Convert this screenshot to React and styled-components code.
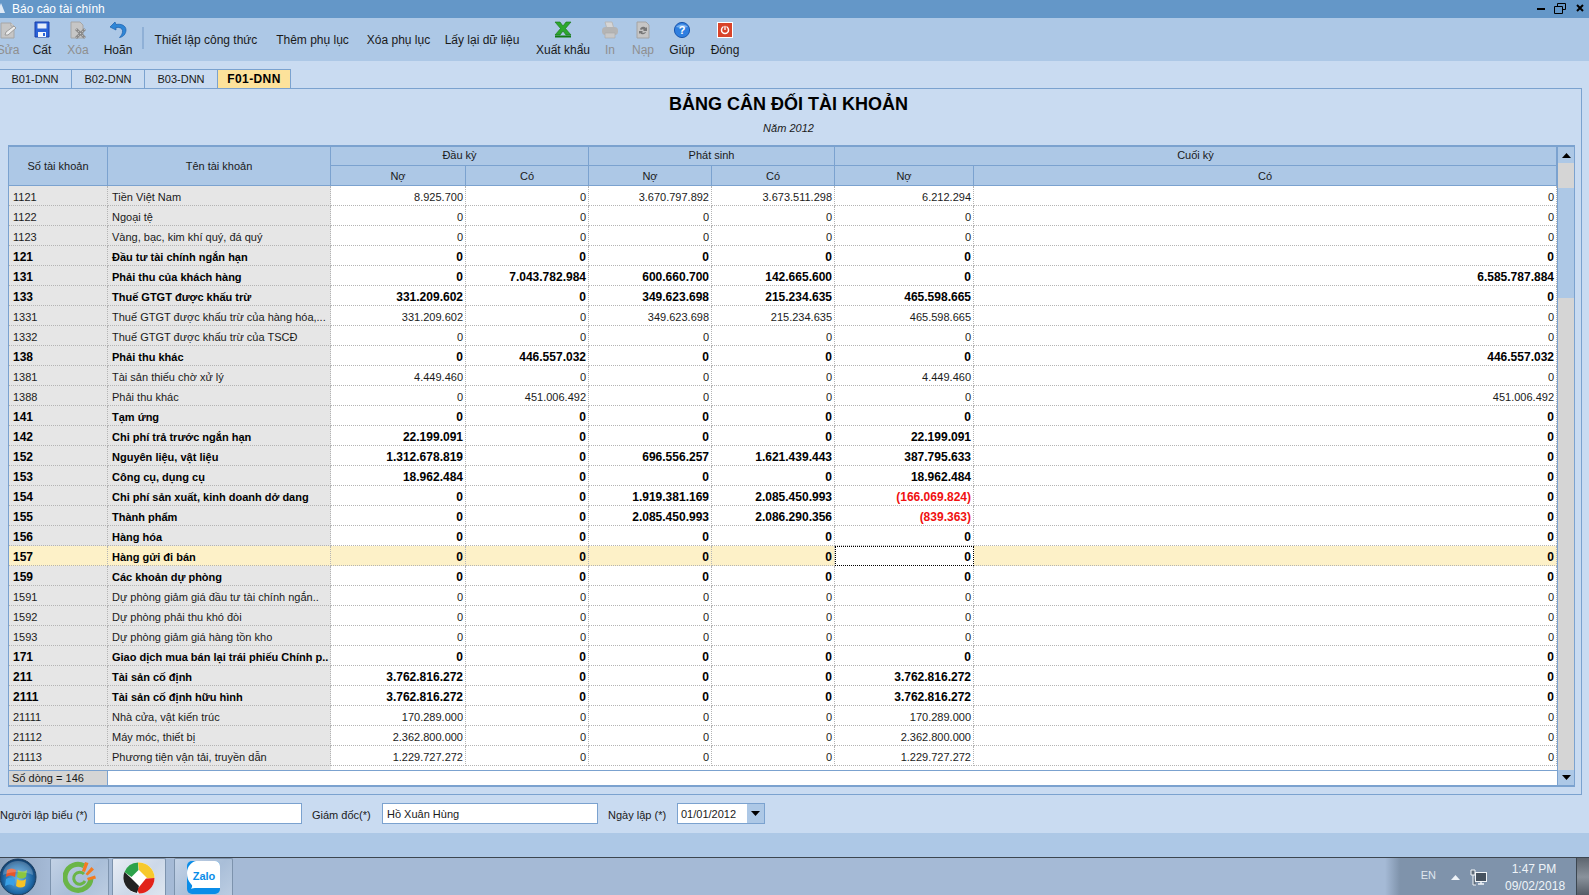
import React from "react";
import styled, { createGlobalStyle } from "styled-components";

const Global = createGlobalStyle`
  html, body { margin: 0; padding: 0; background: #c9dbf1; }
  * { box-sizing: border-box; }
  body { font-family: "Liberation Sans", Arial, sans-serif; font-size: 12px; color: #1a1a1a; }
`;

const Page = styled.div`
  width: 1589px; height: 895px; display: flex; flex-direction: column; overflow: hidden; background: #c9dbf1;
`;
const TitleBar = styled.div`
  height: 18px; background: #6497c8; display: flex; align-items: center; color: #fff; flex: none;
  font-size: 12px; padding-left: 12px; position: relative;
`;
const TitleIcon = styled.svg`
  position: absolute; left: -3px; top: 3px;
`;
const WinControls = styled.div`
  margin-left: auto; display: flex; align-items: center; height: 18px; padding-right: 5px; gap: 6px;
`;
const RestoreGlyph = styled.svg`
  margin-left: 3px; margin-top: -1px;
`;
const CloseGlyph = styled.svg`
  margin-left: 4px; margin-bottom: 3px;
`;
const Toolbar = styled.div`
  height: 43px; background: #adc8e6; display: flex; flex: none; margin-left: -9px;
`;
const ToolButton = styled.div`
  width: ${p => p.$w}px; flex: none; display: flex; flex-direction: column; align-items: center; height: 43px;
  padding-top: 3px; white-space: nowrap; color: ${p => (p.$off ? "#8f8f8f" : "#1a1a1a")};
`;
const ToolIcon = styled.div`
  height: 18px; display: flex; align-items: center; justify-content: center;
`;
const ToolLabel = styled.div`
  margin-top: 3px; line-height: 16px; font-size: 12px;
`;
const TextButton = styled.div`
  width: ${p => p.$w}px; flex: none; height: 43px; display: flex; align-items: center; justify-content: center;
  white-space: nowrap; padding-top: 1px; font-size: 12px; color: #1a1a1a;
`;
const ToolSep = styled.div`
  width: 2px; height: 22px; margin: 9px 3px 0 3px; background: #8fb0d6; flex: none;
`;
const TabStrip = styled.div`
  display: flex; height: 27px; padding-top: 8px; flex: none; margin-left: -1px;
`;
const Tab = styled.div`
  width: 73px; height: 19px; display: flex; align-items: center; justify-content: center;
  border-top: 1px solid #7ba2cf; border-right: 1px solid #7ba2cf;
  font-size: ${p => (p.$on ? 12 : 11)}px;
  letter-spacing: ${p => (p.$on ? "0.4px" : "0")};
  background: ${p => (p.$on ? "#fde29b" : "transparent")};
  font-weight: ${p => (p.$on ? 700 : 400)};
  color: ${p => (p.$on ? "#000" : "#1a1a1a")};
`;
const Panel = styled.div`
  width: 1582px; height: 707px; flex: none; border-top: 1px solid #7ba2cf; border-right: 1px solid #7ba2cf;
  border-bottom: 1px solid #7ba2cf; display: flex; flex-direction: column;
`;
const ReportTitle = styled.div`
  text-align: center; font-size: 18px; font-weight: 700; color: #000; margin-top: 5px; line-height: 20px; padding-right: 4px;
`;
const ReportSub = styled.div`
  text-align: center; font-size: 11px; font-style: italic; color: #1a1a1a; margin-top: 7px; line-height: 14px; padding-right: 4px;
`;
const Grid = styled.div`
  margin: 10px 0 0 8px; width: 1567px; height: 642px; display: flex;
  border-top: 2px solid #7ba2cf; border-left: 1px solid #7ba2cf; border-right: 1px solid #7ba2cf; border-bottom: 2px solid #7ba2cf;
`;
const GridBody = styled.div`
  width: 1548px; flex: none; display: flex; flex-direction: column; background: #fff;
`;
const Table = styled.table`
  border-collapse: separate; border-spacing: 0; table-layout: fixed; width: 1548px; flex: none;
`;
const HeadCell = styled.th`
  background: #adc8e6; font-weight: 400; color: #1a1a1a; padding: 0; font-size: 11px; text-align: center;
  height: ${p => p.$h}px; line-height: 14px; border-right: 1px solid #7ba2cf; border-bottom: 1px solid #7ba2cf;
`;
const GroupCell = styled(HeadCell)`
  padding-bottom: 2px;
`;
const Cell = styled.td`
  height: 20px; padding: 4px 2px 0 0; white-space: nowrap; overflow: hidden; text-align: right; line-height: 15px;
  border-right: 1px dotted #b4b4b4; border-bottom: 1px dotted #b4b4b4;
  font-size: ${p => (p.$b ? 12 : 11)}px;
  background: ${p => (p.$hi ? "#fdf1c8" : "#fff")};
  font-weight: ${p => (p.$b ? 700 : 400)};
  color: ${p => (p.$red ? "#f01010" : p.$b ? "#000" : "#1a1a1a")};
`;
const FocusCell = styled(Cell)`
  background: #fff; outline: 1px dotted #000; outline-offset: -1px;
  border-right-color: #000; border-bottom-color: #000;
`;
const CodeCell = styled(Cell)`
  text-align: left; padding-left: 4px;
  background: ${p => (p.$hi ? "#fdf1c8" : "#e6e6e6")};
`;
const NameCell = styled(Cell)`
  text-align: left; padding-left: 4px; font-size: 11px;
  background: ${p => (p.$hi ? "#fdf1c8" : "#e6e6e6")};
`;
const Filler = styled.div`
  flex: 1; min-height: 0;
`;
const FillerLabel = styled.div`
  width: 322px; height: 100%; background: #e6e6e6;
`;
const StatusRow = styled.div`
  height: 15px; display: flex; flex: none; border-top: 1px solid #7ba2cf; background: #fff;
`;
const StatusLabel = styled.div`
  width: 99px; background: #d5d5d5; border-right: 1px solid #7ba2cf; padding-left: 3px; line-height: 14px; font-size: 11px; color: #1a1a1a;
`;
const ScrollBar = styled.div`
  flex: 1; display: flex; flex-direction: column; background: #d5d5d5; border-left: 1px solid #7ba2cf;
`;
const ScrollButton = styled.div`
  height: ${p => p.$h}px; background: #adc8e6; display: flex; align-items: center; justify-content: center; flex: none;
`;
const ScrollTrack = styled.div`
  flex: 1; padding-top: 25px; background: #d5d5d5;
`;
const ScrollThumb = styled.div`
  height: 110px; background: #adc8e6;
`;
const FormRow = styled.div`
  height: 38px; flex: none; display: flex; align-items: flex-start; padding-top: 8px; font-size: 11px; color: #1a1a1a;
`;
const FormLabel = styled.div`
  width: ${p => p.$w}px; flex: none; line-height: 20px; padding-top: 2px; padding-left: ${p => p.$pad || 0}px; white-space: nowrap;
`;
const Input = styled.div`
  width: ${p => p.$w}px; height: 21px; flex: none; background: #fff; border: 1px solid #7ba2cf; padding: 1px 0 0 ${p => p.$pad || 4}px;
  line-height: 18px; font-size: 11px; color: #1a1a1a; display: flex; justify-content: space-between;
`;
const DropButton = styled.div`
  width: 17px; margin-top: -1px; background: #adc8e6; display: flex; align-items: center; justify-content: center;
`;
const Band = styled.div`
  height: 24px; background: #adc8e6; flex: none;
`;
const Taskbar = styled.div`
  height: 39px; flex: none; display: flex; align-items: stretch; position: relative;
  border-top: 1px solid #3c4650;
  background: linear-gradient(90deg, #8fa4bd 0, #a5bad6 50px, #a5bad6 1385px, #7f93ab 1400px, #7f93ab 1576px);
`;
const StartOrb = styled.div`
  width: 50px; flex: none; display: flex; align-items: center;
`;
const TaskButton = styled.div`
  width: ${p => p.$w}px; margin-right: ${p => p.$mr}px; flex: none; display: flex; align-items: center; justify-content: center;
  border: 1px solid #7d93ad; border-bottom: none; border-radius: 2px 2px 0 0;
  background: ${p => (p.$light
    ? "linear-gradient(135deg,#e8edf5 0,#ccd8e8 55%,#dfe6f0 100%)"
    : "linear-gradient(135deg,#c3d2e6 0,#a9bed8 55%,#bccde2 100%)")};
`;
const Tray = styled.div`
  margin-left: auto; display: flex; align-items: center; color: #e8eef5;
`;
const TrayLang = styled.div`
  font-size: 11px; margin-right: 15px; margin-top: -4px; color: #dfe6ee;
`;
const TrayIcons = styled.div`
  display: flex; align-items: center; gap: 10px; margin-right: 18px;
`;
const Clock = styled.div`
  width: 58px; text-align: center; font-size: 12px; line-height: 17px; margin-right: 13px; margin-top: 2px; color: #eef3f8;
`;
const ShowDesktop = styled.div`
  width: 13px; align-self: stretch; background: linear-gradient(#5e6670, #8a929c 50%, #525a64); border-left: 1px solid #3c4650;
`;

const I = ({ children, w = 20, h = 18 }) => (
  <svg width={w} height={h} viewBox={`0 0 ${w} ${h}`}>{children}</svg>
);
const EditIcon = () => (
  <I>
    <path d="M3 2h10l3 3v12H3z" fill="#c6c6c6" stroke="#a6a6a6" />
    <path d="M13 2v3h3" fill="#e4e4e4" stroke="#a6a6a6" />
    <path d="M8 11l8-6 2 2-8 7H7z" fill="#ececec" stroke="#9c9c9c" />
  </I>
);
const SaveIcon = () => (
  <I>
    <path d="M3 1h14v15H3z" fill="#2a62d8" stroke="#1a3fa8" />
    <path d="M5.500 2.500h9v5h-9z" fill="#e6edfa" />
    <path d="M6 11h8v5H6z" fill="#f2f5fb" />
    <path d="M11 12h2v3h-2z" fill="#2a62d8" />
  </I>
);
const DeleteIcon = () => (
  <I>
    <path d="M3 1h9l3 3v13H3z" fill="#c6c6c6" stroke="#a6a6a6" />
    <path d="M8 8l9 9M17 8l-9 9" stroke="#8a8a8a" strokeWidth="2.800" />
    <path d="M8 8l9 9M17 8l-9 9" stroke="#d4d4d4" strokeWidth="1" strokeDasharray="1 2" />
  </I>
);
const UndoIcon = () => (
  <I w={18}>
    <path d="M6 1L1 6l6 3V6.500c3.500-.5 6 .5 6.500 3 .4 2.500-1 5-3 7 4-.5 6.500-4 6.500-7.500C17 4.500 12 2.500 7 3.500z" fill="#2f86d6" stroke="#1c60ad" strokeWidth=".7" />
  </I>
);
const ExcelIcon = () => (
  <I>
    <path d="M2 14.500h16v2H2z" fill="#127a12" />
    <path d="M2 1h5l3 4 3-4h5l-5.500 6.500L18 14h-5l-3-4-3 4H2l5.500-6.500z" fill="#2da82d" stroke="#157015" strokeWidth=".6" />
  </I>
);
const PrintIcon = () => (
  <I>
    <path d="M5 1h7l2 7H7z" fill="#d6d6d6" stroke="#b8b8b8" />
    <rect x="2" y="6" width="16" height="8" rx="3.500" fill="#b4b4b4" />
    <path d="M5 12h10v5H5z" fill="#c8c8c8" stroke="#a8a8a8" strokeWidth=".6" />
  </I>
);
const ReloadIcon = () => (
  <I>
    <path d="M4 1h9l3 3v13H4z" fill="#c6c6c6" stroke="#a4a4a4" />
    <path d="M7 8a3.500 3.500 0 0 1 6-1l1-1v4h-4l1-1a2 2 0 0 0-3 0zM13 11a3.500 3.500 0 0 1-6 1l-1 1v-3h4l-1 1a2 2 0 0 0 3 0z" fill="#777" />
  </I>
);
const HelpIcon = () => (
  <I>
    <circle cx="10" cy="9" r="7.600" fill="#2f7fe0" stroke="#1a56ad" />
    <path d="M4 6a7 5 0 0 1 12 0c-3 1-9 1-12 0z" fill="#9cc8f5" opacity=".7" />
    <text x="10" y="13" fontSize="11" fontWeight="700" textAnchor="middle" fill="#fff" fontFamily="Liberation Sans">?</text>
  </I>
);
const CloseIcon = () => (
  <I>
    <rect x="2.500" y="1.500" width="15" height="15" fill="#d8432a" stroke="#fff" />
    <circle cx="10" cy="9" r="3.500" fill="none" stroke="#fff" strokeWidth="1.500" />
    <path d="M10 4.500v4" stroke="#d8432a" strokeWidth="3" />
    <path d="M10 5v4" stroke="#fff" strokeWidth="1.300" />
  </I>
);
const UpArrow = () => (
  <svg width="9" height="5" viewBox="0 0 9 5"><path d="M4.500 0L9 5H0z" fill="#000" /></svg>
);
const DownArrow = () => (
  <svg width="9" height="5" viewBox="0 0 9 5"><path d="M0 0h9L4.500 5z" fill="#000" /></svg>
);

const WinLogo = () => (
  <svg width="38" height="38" viewBox="0 0 38 38">
    <defs>
      <radialGradient id="orb" cx="50%" cy="55%" r="55%">
        <stop offset="0" stopColor="#6db5e8" />
        <stop offset="0.7" stopColor="#1f6aa8" />
        <stop offset="1" stopColor="#0f3a68" />
      </radialGradient>
    </defs>
    <circle cx="18" cy="19" r="18" fill="url(#orb)" stroke="#1c3f60" />
    <path d="M7 12c3-2 6-2 9 0l-1 7c-3-2-6-2-9 0z" fill="#e8562a" />
    <path d="M18 12c3 2 6 2 9 0l-1 7c-3 2-6 2-9 0z" fill="#8cc63f" />
    <path d="M6 21c3-2 6-2 9 0l-1 7c-3-2-6-2-9 0z" fill="#39a0e6" />
    <path d="M17 21c3 2 6 2 9 0l-1 7c-3 2-6 2-9 0z" fill="#f7c325" />
    <path d="M3 17a15 14 0 0 1 30 0c-8-4-22-4-30 0z" fill="#fff" opacity=".22" />
  </svg>
);
const CocCoc = () => (
  <svg width="33" height="33" viewBox="0 0 33 33">
    <path d="M21 4.800A13 13 0 1 0 28 17" fill="none" stroke="#6ab547" strokeWidth="5" />
    <path d="M21 13a6 6 0 1 0 1 7" fill="none" stroke="#6ab547" strokeWidth="3" />
    <path d="M19 10l3-9 3.500 1-3.500 9zM22.500 13l6-7 2.500 2.500-6.500 6zM24 17l8-2.500 1 3-8 2z" fill="#f47b20" />
  </svg>
);
const Diamond = () => (
  <svg width="32" height="32" viewBox="0 0 32 32">
    <circle cx="16" cy="16" r="15.500" fill="#fff" />
    <path d="M15 .6A15.500 15.500 0 0 0 1.500 10l7 5 7-7z" fill="#2da24a" />
    <path d="M15 .6A15.500 15.500 0 0 1 31.500 16H24l-8-8z" fill="#f7c92c" />
    <path d="M31.500 16A15.500 15.500 0 0 1 16 31.500l-2-4 9-11z" fill="#e2231a" />
    <path d="M1.500 10a15.500 15.500 0 0 0 12.500 21l2-7-8-8z" fill="#222" />
    <path d="M16 10l6 6-6 6-6-6z" fill="#fff" />
  </svg>
);
const Zalo = () => (
  <svg width="33" height="33" viewBox="0 0 33 33">
    <rect width="33" height="33" rx="5" fill="#0a8de8" />
    <path d="M9 0h19a5 5 0 0 1 5 5v22H10c-3 0-5 0-6 1 1-2 2-3 0-5C1 20 0 16 0 12 0 6 4 1 9 0z" fill="#fff" />
    <text x="17" y="19" fontSize="11" fontWeight="700" textAnchor="middle" fill="#0a8de8" fontFamily="Liberation Sans">Zalo</text>
  </svg>
);
const NetIcon = () => (
  <svg width="17" height="17" viewBox="0 0 17 17">
    <rect x="5.500" y="3.500" width="11" height="9" fill="#46525f" stroke="#f2f5f8" />
    <path d="M8 15h6M11 13v2" stroke="#f2f5f8" strokeWidth="1.400" />
    <path d="M1 1h4v5H1zM3 6v10h3" fill="#5f6c7a" stroke="#f2f5f8" />
  </svg>
);

const Z = ["0", "0", "0", "0", "0", "0"];
const rows = [
  ["1121", "Tiền Việt Nam", 0, ["8.925.700", "0", "3.670.797.892", "3.673.511.298", "6.212.294", "0"]],
  ["1122", "Ngoại tệ", 0, Z],
  ["1123", "Vàng, bạc, kim khí quý, đá quý", 0, Z],
  ["121", "Đầu tư tài chính ngắn hạn", 1, Z],
  ["131", "Phải thu của khách hàng", 1, ["0", "7.043.782.984", "600.660.700", "142.665.600", "0", "6.585.787.884"]],
  ["133", "Thuế GTGT được khấu trừ", 1, ["331.209.602", "0", "349.623.698", "215.234.635", "465.598.665", "0"]],
  ["1331", "Thuế GTGT được khấu trừ của hàng hóa,...", 0, ["331.209.602", "0", "349.623.698", "215.234.635", "465.598.665", "0"]],
  ["1332", "Thuế GTGT được khấu trừ của TSCĐ", 0, Z],
  ["138", "Phải thu khác", 1, ["0", "446.557.032", "0", "0", "0", "446.557.032"]],
  ["1381", "Tài sản thiếu chờ xử lý", 0, ["4.449.460", "0", "0", "0", "4.449.460", "0"]],
  ["1388", "Phải thu khác", 0, ["0", "451.006.492", "0", "0", "0", "451.006.492"]],
  ["141", "Tạm ứng", 1, Z],
  ["142", "Chi phí trả trước ngắn hạn", 1, ["22.199.091", "0", "0", "0", "22.199.091", "0"]],
  ["152", "Nguyên liệu, vật liệu", 1, ["1.312.678.819", "0", "696.556.257", "1.621.439.443", "387.795.633", "0"]],
  ["153", "Công cụ, dụng cụ", 1, ["18.962.484", "0", "0", "0", "18.962.484", "0"]],
  ["154", "Chi phí sản xuất, kinh doanh dở dang", 1, ["0", "0", "1.919.381.169", "2.085.450.993", "(166.069.824)", "0"]],
  ["155", "Thành phẩm", 1, ["0", "0", "2.085.450.993", "2.086.290.356", "(839.363)", "0"]],
  ["156", "Hàng hóa", 1, Z],
  ["157", "Hàng gửi đi bán", 1, Z, true],
  ["159", "Các khoản dự phòng", 1, Z],
  ["1591", "Dự phòng giảm giá đầu tư tài chính ngắn..", 0, Z],
  ["1592", "Dự phòng phải thu khó đòi", 0, Z],
  ["1593", "Dự phòng giảm giá hàng tồn kho", 0, Z],
  ["171", "Giao dịch mua bán lại trái phiếu Chính p..", 1, Z],
  ["211", "Tài sản cố định", 1, ["3.762.816.272", "0", "0", "0", "3.762.816.272", "0"]],
  ["2111", "Tài sản cố định hữu hình", 1, ["3.762.816.272", "0", "0", "0", "3.762.816.272", "0"]],
  ["21111", "Nhà cửa, vật kiến trúc", 0, ["170.289.000", "0", "0", "0", "170.289.000", "0"]],
  ["21112", "Máy móc, thiết bị", 0, ["2.362.800.000", "0", "0", "0", "2.362.800.000", "0"]],
  ["21113", "Phương tiện vận tải, truyền dẫn", 0, ["1.229.727.272", "0", "0", "0", "1.229.727.272", "0"]],
];
const colWidths = [99, 223, 135, 123, 123, 123, 139, 583];

export default function App() {
  return (
    <Page>
      <Global />
      <TitleBar>
        <TitleIcon width="8" height="10" viewBox="0 0 8 10"><path d="M4 0l4 10H0z" fill="#dfeaf6" /></TitleIcon>
        Báo cáo tài chính
        <WinControls>
          <svg width="8" height="3" viewBox="0 0 8 3"><rect width="8" height="2" fill="#000" /></svg>
          <RestoreGlyph width="12" height="11" viewBox="0 0 12 11">
            <path d="M3.500 3V.5h8v6H9M.5 3.500h8v7h-8z" fill="none" stroke="#000" />
          </RestoreGlyph>
          <CloseGlyph width="8" height="8" viewBox="0 0 8 8">
            <path d="M1 1l6 6M7 1L1 7" stroke="#000" strokeWidth="2" />
          </CloseGlyph>
        </WinControls>
      </TitleBar>

      <Toolbar>
        <ToolButton $w={34} $off><ToolIcon><EditIcon /></ToolIcon><ToolLabel>Sửa</ToolLabel></ToolButton>
        <ToolButton $w={34}><ToolIcon><SaveIcon /></ToolIcon><ToolLabel>Cất</ToolLabel></ToolButton>
        <ToolButton $w={38} $off><ToolIcon><DeleteIcon /></ToolIcon><ToolLabel>Xóa</ToolLabel></ToolButton>
        <ToolButton $w={42}><ToolIcon><UndoIcon /></ToolIcon><ToolLabel>Hoãn</ToolLabel></ToolButton>
        <ToolSep />
        <TextButton $w={118}>Thiết lập công thức</TextButton>
        <TextButton $w={95}>Thêm phụ lục</TextButton>
        <TextButton $w={77}>Xóa phụ lục</TextButton>
        <TextButton $w={90}>Lấy lại dữ liệu</TextButton>
        <ToolButton $w={72}><ToolIcon><ExcelIcon /></ToolIcon><ToolLabel>Xuất khẩu</ToolLabel></ToolButton>
        <ToolButton $w={22} $off><ToolIcon><PrintIcon /></ToolIcon><ToolLabel>In</ToolLabel></ToolButton>
        <ToolButton $w={44} $off><ToolIcon><ReloadIcon /></ToolIcon><ToolLabel>Nạp</ToolLabel></ToolButton>
        <ToolButton $w={34}><ToolIcon><HelpIcon /></ToolIcon><ToolLabel>Giúp</ToolLabel></ToolButton>
        <ToolButton $w={52}><ToolIcon><CloseIcon /></ToolIcon><ToolLabel>Đóng</ToolLabel></ToolButton>
      </Toolbar>

      <TabStrip>
        <Tab>B01-DNN</Tab>
        <Tab>B02-DNN</Tab>
        <Tab>B03-DNN</Tab>
        <Tab $on>F01-DNN</Tab>
      </TabStrip>

      <Panel>
        <ReportTitle>BẢNG CÂN ĐỐI TÀI KHOẢN</ReportTitle>
        <ReportSub>Năm 2012</ReportSub>
        <Grid>
          <GridBody>
            <Table>
              <colgroup>
                {colWidths.map((w, i) => <col key={i} style={{ width: w }} />)}
              </colgroup>
              <thead>
                <tr>
                  <HeadCell rowSpan={2} $h={39}>Số tài khoản</HeadCell>
                  <HeadCell rowSpan={2} $h={39}>Tên tài khoản</HeadCell>
                  <GroupCell colSpan={2} $h={19}>Đầu kỳ</GroupCell>
                  <GroupCell colSpan={2} $h={19}>Phát sinh</GroupCell>
                  <GroupCell colSpan={2} $h={19}>Cuối kỳ</GroupCell>
                </tr>
                <tr>
                  {["Nợ", "Có", "Nợ", "Có", "Nợ", "Có"].map((t, i) => <HeadCell key={i} $h={20}>{t}</HeadCell>)}
                </tr>
              </thead>
              <tbody>
                {rows.map(([code, name, bold, vals, hi]) => (
                  <tr key={code}>
                    <CodeCell $b={bold} $hi={hi}>{code}</CodeCell>
                    <NameCell $b={bold} $hi={hi}>{name}</NameCell>
                    {vals.map((v, i) =>
                      hi && i === 4 ? (
                        <FocusCell key={i} $b={bold}>{v}</FocusCell>
                      ) : (
                        <Cell key={i} $b={bold} $hi={hi} $red={v.startsWith("(")}>{v}</Cell>
                      )
                    )}
                  </tr>
                ))}
              </tbody>
            </Table>
            <Filler><FillerLabel /></Filler>
            <StatusRow><StatusLabel>Số dòng = 146</StatusLabel></StatusRow>
          </GridBody>
          <ScrollBar>
            <ScrollButton $h={16}><UpArrow /></ScrollButton>
            <ScrollTrack><ScrollThumb /></ScrollTrack>
            <ScrollButton $h={15}><DownArrow /></ScrollButton>
          </ScrollBar>
        </Grid>
      </Panel>

      <FormRow>
        <FormLabel $w={94}>Người lập biểu (*)</FormLabel>
        <Input $w={208} />
        <FormLabel $w={80} $pad={10}>Giám đốc(*)</FormLabel>
        <Input $w={216}>Hồ Xuân Hùng</Input>
        <FormLabel $w={79} $pad={10}>Ngày lập (*)</FormLabel>
        <Input $w={88} $pad={3}>01/01/2012<DropButton><DownArrow /></DropButton></Input>
      </FormRow>
      <Band />

      <Taskbar>
        <StartOrb><WinLogo /></StartOrb>
        <TaskButton $w={59} $mr={3}><CocCoc /></TaskButton>
        <TaskButton $w={54} $mr={8} $light><Diamond /></TaskButton>
        <TaskButton $w={59} $mr={0}><Zalo /></TaskButton>
        <Tray>
          <TrayLang>EN</TrayLang>
          <TrayIcons>
            <svg width="9" height="5" viewBox="0 0 9 5"><path d="M4.500 0L9 5H0z" fill="#eef2f7" /></svg>
            <NetIcon />
          </TrayIcons>
          <Clock>1:47 PM<br />09/02/2018</Clock>
          <ShowDesktop />
        </Tray>
      </Taskbar>
    </Page>
  );
}
